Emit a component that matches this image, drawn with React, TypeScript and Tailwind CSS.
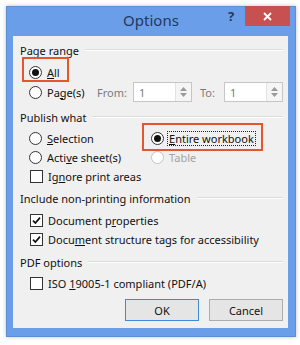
import React from 'react';

const font = { fontFamily: '"Noto Sans", "Segoe UI", sans-serif' };

function Radio({ checked, disabled }: { checked?: boolean; disabled?: boolean }) {
  return (
    <span
      className={`flex h-[13px] w-[13px] shrink-0 items-center justify-center rounded-full border bg-white ${
        disabled ? 'border-[#c4c4c4] bg-[#f4f4f4]' : 'border-[#333333]'
      }`}
    >
      {checked && <span className="h-[7px] w-[7px] rounded-full bg-[#111]" />}
    </span>
  );
}

function Check({ checked }: { checked?: boolean }) {
  return (
    <span className="flex h-[13px] w-[13px] shrink-0 items-center justify-center border border-[#333333] bg-white">
      {checked && (
        <svg width="9" height="9" viewBox="0 0 9 9">
          <path d="M1 4.6 L3.4 7 L8 1.6" fill="none" stroke="#111" strokeWidth="1.7" />
        </svg>
      )}
    </span>
  );
}

function GroupLabel({ text, className = '' }: { text: string; className?: string }) {
  return (
    <div className={`flex h-4 items-center gap-[6px] pl-[7px] pr-[5px] ${className}`}>
      <span className="whitespace-nowrap">{text}</span>
      <span className="h-[2px] flex-1 border-t border-b border-t-[#dcdcdc] border-b-white" />
    </div>
  );
}

function Spin() {
  return (
    <div className="flex h-5 w-[59px] items-center border border-[#c6c6c6] bg-white">
      <span className="flex-1 pl-[5px] text-[#7a7a7a]">1</span>
      <span className="flex h-full w-[16px] flex-col items-center justify-center gap-[2px] border-l border-[#e2e2e2] bg-[#f5f5f5]">
        <svg width="7" height="4" viewBox="0 0 7 4"><path d="M0 4 L3.5 0 L7 4Z" fill="#9a9a9a" /></svg>
        <svg width="7" height="4" viewBox="0 0 7 4"><path d="M0 0 L3.5 4 L7 0Z" fill="#9a9a9a" /></svg>
      </span>
    </div>
  );
}

export default function App() {
  return (
    <div className="h-[345px] w-[300px] bg-white pl-[6px] pt-[6px] text-[11px] leading-none text-[#111]" style={font}>
      <div className="flex h-[331px] w-[290px] flex-col border border-[#5b8fd6] bg-[#6b9ee9] shadow-[0_0_4px_rgba(0,0,0,0.25)]">
        {/* title bar */}
        <div className="relative flex h-[29px] shrink-0 items-start">
          <span className="absolute left-0 right-0 top-[6px] text-center text-[15px] text-[#23395d]">Options</span>
          <span className="absolute left-[221px] top-[3px] text-[13px] font-bold text-[#23395d]">?</span>
          <span className="absolute right-[5px] top-[-1px] flex h-[20px] w-[45px] items-center justify-center bg-[#c75050]">
            <svg width="9" height="9" viewBox="0 0 9 9">
              <path d="M1 1 L8 8 M8 1 L1 8" stroke="#fff" strokeWidth="1.8" />
            </svg>
          </span>
        </div>

        {/* body */}
        <div className="ml-[6px] mr-[7px] flex flex-col bg-[#f0f0f0] pb-[7px] pt-[6px]">
          <GroupLabel text="Page range" />

          <div className="relative mt-[4px] flex h-5 items-center pl-[16px]">
            <span className="absolute left-[9px] top-[-5px] h-[25px] w-[47px] border-2 border-[#e4572e]" />
            <Radio checked />
            <span className="ml-[5px]">
              <u>A</u>ll
            </span>
          </div>

          <div className="flex h-5 items-center pl-[16px]">
            <Radio />
            <span className="ml-[5px] w-[50px]">
              Pa<u>g</u>e(s)
            </span>
            <span className="w-[36px] text-[#7a7a7a]">From:</span>
            <Spin />
            <span className="ml-[8px] w-[24px] text-[#7a7a7a]">To:</span>
            <Spin />
          </div>

          <GroupLabel text="Publish what" className="mt-[7px]" />

          <div className="mt-[3px] grid grid-cols-[122px_1fr]">
            <div className="flex h-5 items-center pl-[16px]">
              <Radio />
              <span className="ml-[5px]">
                <u>S</u>election
              </span>
            </div>
            <div className="relative flex h-5 items-center pl-[16px]">
              <span className="absolute left-[7px] top-[-5px] h-[28px] w-[121px] border-2 border-[#e4572e]" />
              <Radio checked />
              <span className="ml-[3px] border border-dotted border-[#222] px-[1px] py-[1px]">
                <u>E</u>ntire workbook
              </span>
            </div>
            <div className="flex h-[19px] items-center pl-[16px]">
              <Radio />
              <span className="ml-[5px]">
                Acti<u>v</u>e sheet(s)
              </span>
            </div>
            <div className="flex h-[19px] items-center pl-[16px]">
              <Radio disabled />
              <span className="ml-[5px] text-[#a3a3a3]">Table</span>
            </div>
          </div>

          <div className="flex h-[19px] items-center pl-[17px]">
            <Check />
            <span className="ml-[5px]">
              Ig<u>n</u>ore print areas
            </span>
          </div>

          <GroupLabel text="Include non-printing information" className="mt-[4px]" />

          <div className="mt-[4px] flex h-5 items-center pl-[17px]">
            <Check checked />
            <span className="ml-[5px]">
              Document p<u>r</u>operties
            </span>
          </div>
          <div className="flex h-[19px] items-center pl-[17px]">
            <Check checked />
            <span className="ml-[5px]">
              Docu<u>m</u>ent structure tags for accessibility
            </span>
          </div>

          <GroupLabel text="PDF options" className="mt-[5px]" />

          <div className="mt-[3px] flex h-5 items-center pl-[17px]">
            <Check />
            <span className="ml-[5px]">
              ISO <u>1</u>9005-1 compliant (PDF/A)
            </span>
          </div>

          <div className="mt-[6px] flex justify-end gap-[10px] pr-[5px]">
            <button className="flex h-[22px] w-[74px] items-center justify-center border border-[#3c8ad8] bg-[#e5e5e5]">
              OK
            </button>
            <button className="flex h-[22px] w-[74px] items-center justify-center border border-[#adadad] bg-[#e5e5e5]">
              Cancel
            </button>
          </div>
        </div>
      </div>
    </div>
  );
}
